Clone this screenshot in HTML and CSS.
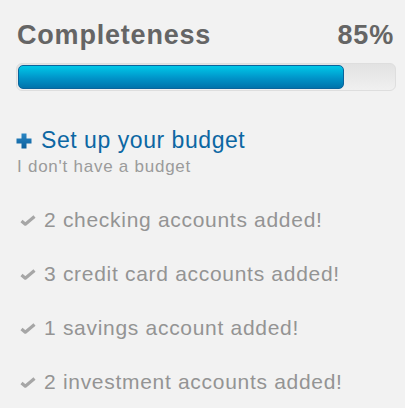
FILE: index.html
```html
<!DOCTYPE html>
<html lang="en">
<head>
	<meta charset="UTF-8">
	<title>Completeness</title>
	<link rel="stylesheet" href="styles.css">
</head>
<body>
	<div class="panel">
		<div class="head">
			<span class="title">Completeness</span>
			<span class="pct">85%</span>
		</div>
		<div class="bar">
			<div class="fill" style="width: 86.7%"></div>
		</div>

		<div class="budget">
			<a class="add" href="#">
				<svg class="plus" width="16" height="16" viewBox="0 0 16 16">
					<defs>
						<linearGradient id="pg" x1="0" y1="0" x2="0" y2="1">
							<stop offset="0" stop-color="#2a86c4"/>
							<stop offset="1" stop-color="#0b5f9c"/>
						</linearGradient>
					</defs>
					<path d="M5.5 0.5h5v5h5v5h-5v5h-5v-5h-5v-5h5z" fill="url(#pg)"/>
				</svg>
				<span>Set up your budget</span>
			</a>
			<div class="sub">I don't have a budget</div>
		</div>

		<ul class="checks">
			<li><svg class="tick" width="16" height="11" viewBox="0 0 16 11"><path d="M1.5 6l3.8 3.2L14.5 1.5" fill="none" stroke="#a6a6a6" stroke-width="3.2" stroke-linejoin="round"/></svg>2 checking accounts added!</li>
			<li><svg class="tick" width="16" height="11" viewBox="0 0 16 11"><path d="M1.5 6l3.8 3.2L14.5 1.5" fill="none" stroke="#a6a6a6" stroke-width="3.2" stroke-linejoin="round"/></svg>3 credit card accounts added!</li>
			<li><svg class="tick" width="16" height="11" viewBox="0 0 16 11"><path d="M1.5 6l3.8 3.2L14.5 1.5" fill="none" stroke="#a6a6a6" stroke-width="3.2" stroke-linejoin="round"/></svg>1 savings account added!</li>
			<li><svg class="tick" width="16" height="11" viewBox="0 0 16 11"><path d="M1.5 6l3.8 3.2L14.5 1.5" fill="none" stroke="#a6a6a6" stroke-width="3.2" stroke-linejoin="round"/></svg>2 investment accounts added!</li>
		</ul>
	</div>
</body>
</html>
```

FILE: styles.css
```css
body {
	margin: 0px;
	background-color: #f2f2f2;
	font-family: "Liberation Sans", Arial, sans-serif;
}
.panel {
	padding: 22px 9px 0px 16px;
}
.head {
	display: flex;
	justify-content: space-between;
	align-items: baseline;
	padding-left: 1px;
	font-size: 27px;
	line-height: 1;
	font-weight: bold;
	color: #656565;
	letter-spacing: 0.8px;
}
.pct {
	margin-right: 2px;
}
.bar {
	margin-top: 14px;
	height: 24px;
	padding: 1px;
	border: 1px solid #dedede;
	border-radius: 6px;
	background: linear-gradient(#e2e2e2, #f0f0f0);
}
.fill {
	box-sizing: border-box;
	height: 24px;
	border: 1px solid #0a649c;
	border-radius: 5px;
	background: linear-gradient(#00c8e8, #0094c9 55%, #0073ab);
}
.budget {
	margin-top: 38px;
}
.add {
	display: flex;
	align-items: center;
	gap: 9px;
	font-size: 23px;
	line-height: 1;
	color: #0c67a3;
	text-decoration: none;
	letter-spacing: 0.55px;
}
.plus {
	margin-top: 1px;
}
.sub {
	margin-top: 6px;
	padding-left: 1px;
	font-size: 17px;
	line-height: 1;
	color: #9b9b9b;
	letter-spacing: 0.75px;
}
.checks {
	list-style: none;
	margin: 34px 0px 0px 0px;
	padding: 0px 0px 0px 4px;
	display: flex;
	flex-direction: column;
	gap: 33px;
}
.checks li {
	display: flex;
	align-items: center;
	gap: 8px;
	font-size: 21px;
	line-height: 1;
	color: #949494;
	letter-spacing: 0.7px;
}
.tick {
	margin-top: 2px;
}
```
